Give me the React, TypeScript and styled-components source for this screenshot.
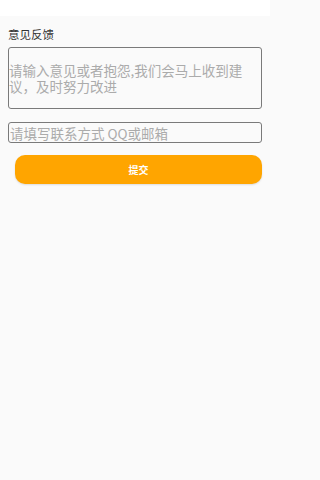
import { FunctionComponent } from 'react'
import styled, { createGlobalStyle } from 'styled-components'

const GlobalStyle = createGlobalStyle`
  html, body {
    margin: 0;
    padding: 0;
    background: #fafafa;
    font-family: "Noto Sans CJK SC", "Noto Sans", sans-serif;
  }
`

const App: FunctionComponent = () => {
  return (
    <>
      <GlobalStyle />
      <Page>
        <StatusBar />
        <Content>
          <Title>意见反馈</Title>
          <Feedback placeholder="请输入意见或者抱怨,我们会马上收到建议，及时努力改进" />
          <Contact placeholder="请填写联系方式 QQ或邮箱" />
          <Submit>提交</Submit>
        </Content>
      </Page>
    </>
  )
}

export default App

const Page = styled.div`
  width: 270px;
  min-height: 480px;
  background: #fafafa;
`

const StatusBar = styled.div`
  height: 16px;
  background: #ffffff;
`

const Content = styled.div`
  display: flex;
  flex-direction: column;
  padding: 10px 8px 0 8px;
`

const Title = styled.h1`
  margin: 0;
  font-size: 11.5px;
  font-weight: 400;
  line-height: 16px;
  color: #333;
`

const fieldBase = `
  box-sizing: border-box;
  width: 100%;
  margin: 0;
  border: 1px solid #7a7a7a;
  border-radius: 3px;
  background: #fafafa;
  font-family: "Noto Sans CJK SC", "Noto Sans", sans-serif;
  font-size: 13.5px;
  color: #333;
  outline: none;
  &::placeholder {
    color: #ababab;
  }
`

const Feedback = styled.textarea`
  ${fieldBase}
  margin-top: 5px;
  height: 62px;
  padding: 14px 14px 0 0;
  line-height: 16px;
  resize: none;
  overflow: hidden;
`

const Contact = styled.input`
  ${fieldBase}
  margin-top: 13px;
  height: 21px;
  padding: 0 0 0 1px;
  line-height: 19px;
`

const Submit = styled.button`
  margin: 12px 0 0 7px;
  height: 29px;
  border: none;
  border-radius: 10px;
  background: #ffa500;
  box-shadow: 0 1px 2px rgba(0, 0, 0, 0.12);
  color: #ffffff;
  font-family: "Noto Sans CJK SC", "Noto Sans", sans-serif;
  font-size: 10px;
  font-weight: 700;
  padding: 0;
`
